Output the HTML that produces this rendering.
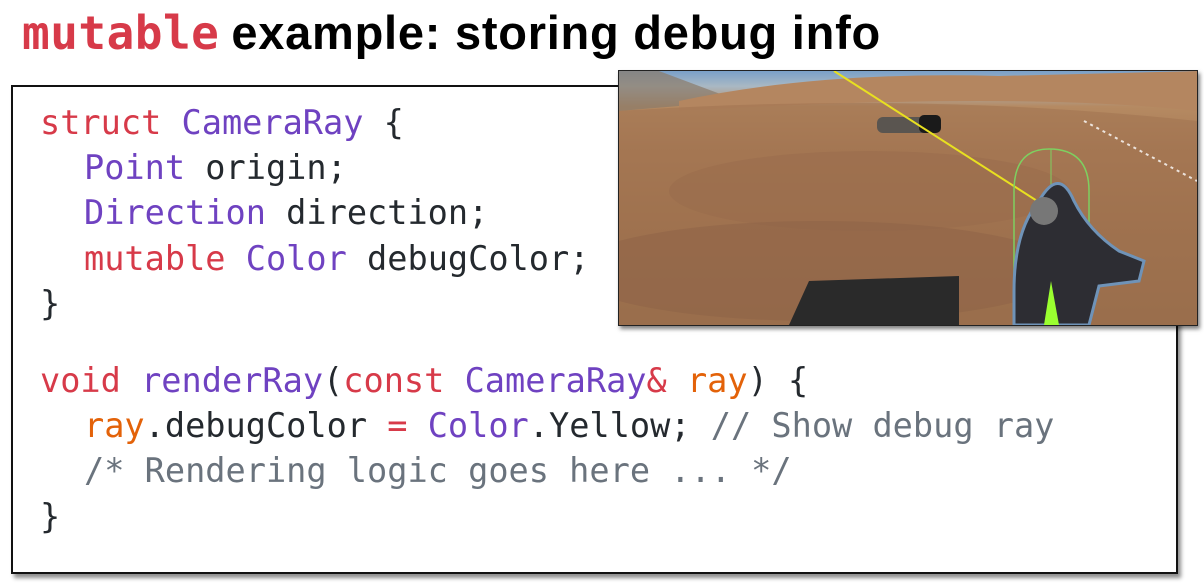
<!DOCTYPE html>
<html><head><meta charset="utf-8"><style>
html,body{margin:0;padding:0;background:#fff;width:1204px;height:585px;overflow:hidden;position:relative}
.title{position:absolute;left:22px;top:3px;height:60px;white-space:nowrap;line-height:60px}
.title .m{font-family:"DejaVu Sans Mono","Liberation Mono",monospace;font-weight:bold;color:#d73a49;font-size:46px;letter-spacing:0.5px}
.title .t{font-family:"Liberation Sans",sans-serif;font-weight:bold;color:#000;font-size:47px;letter-spacing:0.75px;margin-left:12px}
.box{position:absolute;left:11px;top:85px;width:1163px;height:485px;border:2px solid #111;box-shadow:3px 4px 4px rgba(0,0,0,0.45);background:#fff}
pre{position:absolute;margin:0;font-family:"DejaVu Sans Mono","Liberation Mono",monospace;font-size:33.6px;line-height:45.2px;color:#24292e}
.i{display:inline-block;width:44px}
.k{color:#d73a49}.p{color:#6f42c1}.o{color:#e36209}.c{color:#6a737d}
.img{position:absolute;left:618px;top:70px;width:578px;height:254px;border:1px solid #222;box-shadow:2px 3px 4px rgba(0,0,0,0.5);overflow:hidden;
background:linear-gradient(180deg,#7aa0c8 0%,#a9b8c4 6%,#b58a62 14%,#a97a55 30%,#9c6e4b 60%,#8e6444 100%)}
</style></head><body>
<div class="title"><span class="m">mutable</span><span class="t">example: storing debug info</span></div>
<div class="box"></div>
<pre style="left:40px;top:100px"><span class="k">struct</span> <span class="p">CameraRay</span> {
<span class="i"></span><span class="p">Point</span> origin;
<span class="i"></span><span class="p">Direction</span> direction;
<span class="i"></span><span class="k">mutable</span> <span class="p">Color</span> debugColor;
}</pre>
<pre style="left:40px;top:358px"><span class="k">void</span> <span class="p">renderRay</span>(<span class="k">const</span> <span class="p">CameraRay</span><span class="k">&amp;</span> <span class="o">ray</span>) {
<span class="i"></span><span class="o">ray</span>.debugColor <span class="k">=</span> <span class="p">Color</span>.Yellow; <span class="c">// Show debug ray</span>
<span class="i"></span><span class="c">/* Rendering logic goes here ... */</span>
}</pre>
<div class="img">
<svg width="578" height="254" viewBox="0 0 578 254" xmlns="http://www.w3.org/2000/svg">
<path d="M0 0 L40 0 L120 30 L0 40Z" fill="#8a7a6a" opacity="0.7"/>
<path d="M60 30 Q200 0 380 5 L578 0 L578 40 Q400 20 60 40Z" fill="#b48660"/>
<path d="M0 40 Q300 20 578 50 L578 254 L0 254Z" fill="#a27551" opacity="0.6"/>
<ellipse cx="250" cy="120" rx="200" ry="40" fill="#97694a" opacity="0.4"/>
<ellipse cx="200" cy="200" rx="250" ry="50" fill="#8a6045" opacity="0.4"/>
<rect x="258" y="46" width="60" height="16" rx="6" fill="#5a5550"/>
<rect x="300" y="44" width="22" height="18" rx="5" fill="#1a1a1a"/>
<path d="M170 254 L190 210 L340 205 L340 254Z" fill="#2a2a2a"/>
<line x1="215" y1="0" x2="512" y2="190" stroke="#e8e020" stroke-width="2"/>
<path d="M465 50 L578 110" stroke="#fff" stroke-width="2" stroke-dasharray="3 4" opacity="0.8"/>
<path d="M395 254 L395 120 Q395 78 430 78 Q470 78 470 120 L470 254" fill="none" stroke="#7ed060" stroke-width="1.5"/>
<path d="M432 78 L432 254" stroke="#7ed060" stroke-width="1"/>
<path d="M395 220 Q395 160 420 130 Q440 95 455 130 Q470 160 500 180 L525 190 L520 210 L480 215 L470 254 L395 254Z" fill="#2d2d33" stroke="#6f93b8" stroke-width="3"/>
<circle cx="425" cy="140" r="14" fill="#777"/>
<path d="M425 254 L432 210 L440 254Z" fill="#9aff30"/>
</svg>
</div>
</body></html>
